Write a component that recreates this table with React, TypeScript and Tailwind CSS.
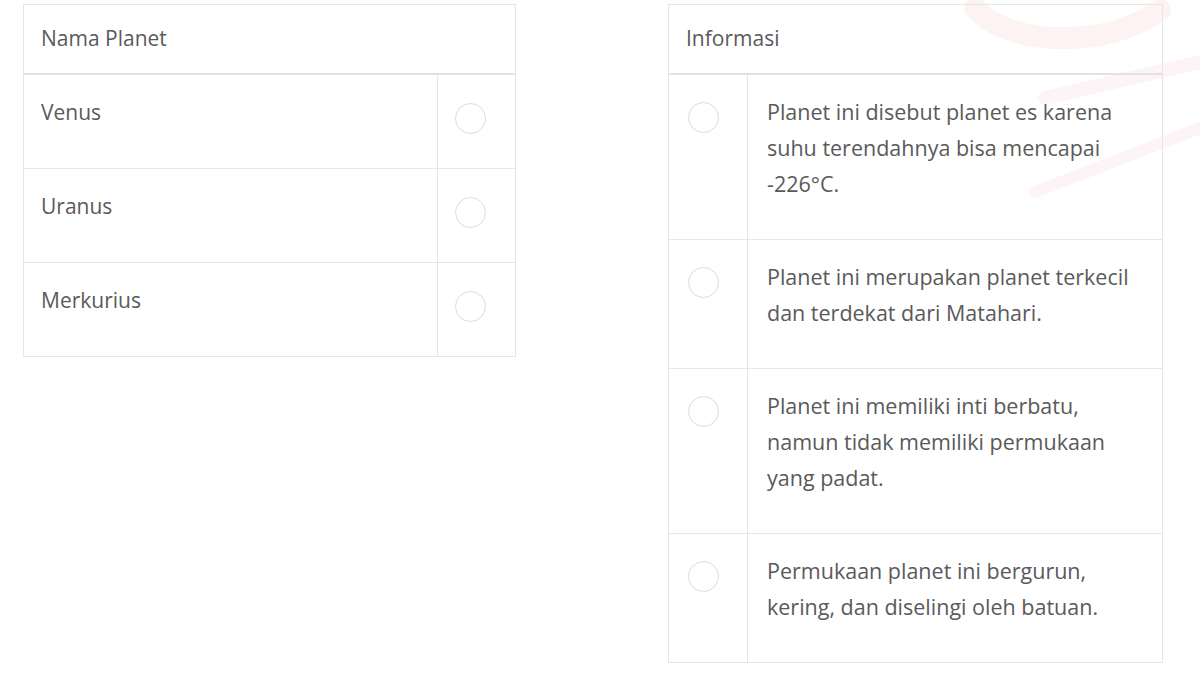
import React from "react";

const font = { fontFamily: '"Open Sans", "Noto Sans", "Liberation Sans", sans-serif' };

function Radio() {
  return <div className="w-[31px] h-[31px] rounded-full border-[1.5px] border-[#dcdcdc] bg-white/60" />;
}

const planets = ["Venus", "Uranus", "Merkurius"];
const infos = [
  "Planet ini disebut planet es karena suhu terendahnya bisa mencapai -226°C.",
  "Planet ini merupakan planet terkecil dan terdekat dari Matahari.",
  "Planet ini memiliki inti berbatu, namun tidak memiliki permukaan yang padat.",
  "Permukaan planet ini bergurun, kering, dan diselingi oleh batuan.",
];

export default function App() {
  return (
    <div className="relative w-[1200px] h-[675px] bg-white overflow-hidden text-[#5a5a5a]" style={font}>
      <svg className="absolute top-0 left-0 pointer-events-none" width="1200" height="675">
        <path d="M975 8 C 1010 48, 1110 48, 1160 10" fill="none" stroke="#fdf3f3" strokeWidth="22" strokeLinecap="round" />
        <path d="M1045 98 L 1200 62" fill="none" stroke="#fdf5f5" strokeWidth="14" strokeLinecap="round" />
        <path d="M1035 192 L 1200 128" fill="none" stroke="#fdf5f5" strokeWidth="12" strokeLinecap="round" />
      </svg>
      <div className="relative flex items-start pt-[4px] pl-[23px]">
        <div className="w-[493px] border border-[#e6e6e6]">
          <div className="h-[70px] flex items-center pl-[17px] border-b-2 border-[#e2e2e2] text-[21px]">Nama Planet</div>
          {planets.map((p, i) => (
            <div key={p} className={`flex ${i < planets.length - 1 ? "border-b border-[#e6e6e6]" : ""}`}>
              <div className="flex-1 pl-[17px] pt-[19px] pb-[38px] text-[21px] leading-[36px]">{p}</div>
              <div className="w-[78px] border-l border-[#e6e6e6] pl-[17px] pt-[28px]">
                <Radio />
              </div>
            </div>
          ))}
        </div>
        <div className="w-[495px] ml-[152px] border border-[#e6e6e6]">
          <div className="h-[70px] flex items-center pl-[17px] border-b-2 border-[#e2e2e2] text-[21px]">Informasi</div>
          {infos.map((t, i) => (
            <div key={i} className={`flex ${i < infos.length - 1 ? "border-b border-[#e6e6e6]" : ""}`}>
              <div className="w-[78px] pl-[19px] pt-[27px]">
                <Radio />
              </div>
              <div className="flex-1 border-l border-[#e6e6e6] pl-[19px] pr-[26px] pt-[19px] pb-[37px] text-[21.5px] leading-[36px]">{t}</div>
            </div>
          ))}
        </div>
      </div>
    </div>
  );
}
